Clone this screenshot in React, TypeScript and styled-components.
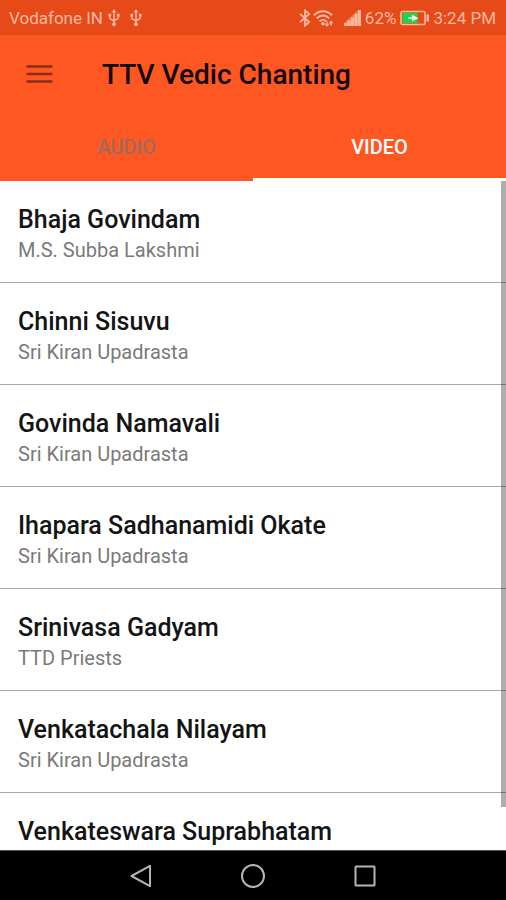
import React from 'react';
import styled, { createGlobalStyle } from 'styled-components';

const GlobalStyle = createGlobalStyle`
  * { box-sizing: border-box; }
  body { margin: 0; font-family: Roboto, sans-serif; background: #ffffff; }
  button { font-family: inherit; }
`;

const Screen = styled.div`
  display: flex;
  flex-direction: column;
  height: 100vh;
  overflow: hidden;
`;

const StatusBar = styled.div`
  display: flex;
  align-items: center;
  justify-content: space-between;
  flex: none;
  height: 35px;
  padding: 0 10px 0 9px;
  background: #e64a19;
  color: #ffb9a0;
  font-size: 17px;
  line-height: 24px;
`;

const StatusGroup = styled.div<{ $gap: number }>`
  display: flex;
  align-items: center;
  gap: ${({ $gap }) => $gap}px;
  white-space: nowrap;
`;

const Signals = styled.span`
  display: flex;
  align-items: center;
  gap: 2px;
  margin-right: 6px;
`;

const Header = styled.header`
  flex: none;
  background: #ff5722;
`;

const Toolbar = styled.div`
  display: flex;
  align-items: center;
  height: 80px;
  padding: 0 24px;
  gap: 48px;
`;

const MenuButton = styled.button`
  display: flex;
  padding: 0;
  border: 0;
  background: none;
  color: #8a2f14;
  cursor: pointer;
`;

const Title = styled.h1`
  margin: 0;
  color: #140603;
  font-size: 28px;
  font-weight: 500;
  line-height: 36px;
  white-space: nowrap;
`;

const Tabs = styled.div`
  display: flex;
  height: 66px;
`;

const Tab = styled.button<{ $active: boolean }>`
  flex: 1;
  padding: 0;
  border: 0;
  border-bottom: 3px solid ${({ $active }) => ($active ? '#ffffff' : '#ff5722')};
  background: none;
  color: ${({ $active }) => ($active ? '#ffffff' : '#9c6c5c')};
  font-size: 20px;
  font-weight: 500;
  line-height: 24px;
  cursor: pointer;
`;

const Content = styled.main`
  position: relative;
  flex: 1;
  min-height: 0;
  overflow: hidden;
  background: #ffffff;
`;

const List = styled.ul`
  margin: 0;
  padding: 0;
  list-style: none;
`;

const Row = styled.li`
  height: 102px;
  padding: 23px 18px 0;
  border-bottom: 1px solid #a8a8a8;
`;

const Name = styled.div`
  color: #141414;
  font-size: 25px;
  font-weight: 500;
  line-height: 32px;
`;

const Artist = styled.div`
  color: #7a7a7a;
  font-size: 20px;
  line-height: 28px;
`;

const ScrollThumb = styled.div`
  position: absolute;
  top: 0;
  right: 0;
  width: 5px;
  height: calc(100% - 43px);
  background: rgba(0, 0, 0, 0.32);
`;

const NavBar = styled.nav`
  display: flex;
  align-items: center;
  justify-content: center;
  gap: 88px;
  flex: none;
  height: 50px;
  border-top: 1px solid #555555;
  background: #000000;
`;

const NavButton = styled.button`
  display: flex;
  padding: 0;
  border: 0;
  background: none;
  color: #b4b4b4;
  cursor: pointer;
`;

const UsbIcon = () => (
  <svg width="12" height="18" viewBox="0 0 12 18" fill="none" stroke="currentColor" strokeWidth="1.4" aria-hidden="true">
    <path d="M6 2v13M1.8 6v3.2c0 1.6 4.2 1.4 4.2 3.4M10.2 6v3c0 1.6-4.2 1.4-4.2 3.4" />
    <path d="M6 0l2.2 3.4H3.8zM.4 4.8h2.8v2.6H.4zM8.8 4.8h2.8v2.6H8.8z" fill="currentColor" stroke="none" />
    <circle cx="6" cy="15.2" r="1.9" fill="currentColor" stroke="none" />
  </svg>
);

const BluetoothIcon = () => (
  <svg width="12" height="18" viewBox="0 0 12 18" fill="none" stroke="currentColor" strokeWidth="1.8" aria-hidden="true">
    <path d="M1.2 5l9 8L6 16.6V1.4L10.2 5l-9 8" />
  </svg>
);

const WifiIcon = () => (
  <svg width="21" height="18" viewBox="0 0 21 18" fill="none" stroke="currentColor" strokeWidth="2" aria-hidden="true">
    <path d="M1 6.2C6 .8 14 .8 19 6.2M3.8 9.4c3.6-3.8 8.8-3.8 12.4 0M6.6 12.4c2-2 4.8-2 6.8 0" />
    <circle cx="10" cy="14.8" r="1.8" fill="currentColor" stroke="none" />
    <path d="M14 12.5v4M12.5 15l1.5 1.7 1.5-1.7M18 16.7v-4M16.5 14.2l1.5-1.7 1.5 1.7" strokeWidth="1.3" />
  </svg>
);

const CellIcon = () => (
  <svg width="17" height="16" viewBox="0 0 17 16" fill="currentColor" aria-hidden="true">
    <path d="M0 13h3v3H0zM3.5 10.5h3V16h-3zM7 7.5h3V16H7zM10.5 4h3v12h-3zM14 0h3v16h-3z" />
    <path d="M0 13L14 0v16H0z" opacity=".45" />
  </svg>
);

const BatteryIcon = () => (
  <svg width="29" height="16" viewBox="0 0 29 16" aria-hidden="true">
    <rect x="1" y="1.5" width="24" height="13" rx="1.5" fill="none" stroke="currentColor" strokeWidth="1.6" />
    <path d="M26.5 4.5H29v7h-2.500z" fill="currentColor" />
    <path d="M2.500 3h15v10h-15z" fill="#12dc4e" />
    <path d="M8 7.200h4V4.800l6.500 3.400-6.500 3V9H8z" fill="#e9ffe9" />
  </svg>
);

const MenuIcon = () => (
  <svg width="30" height="22" viewBox="0 0 30 22" stroke="currentColor" strokeWidth="2.4" aria-hidden="true">
    <path d="M2.500 2.500h26M2.500 10h26M2.500 17.500h26" />
  </svg>
);

const navIcons = [
  { label: 'Back', shape: <path d="M2.500 12L21 1.800v20.400z" /> },
  { label: 'Home', shape: <circle cx="12" cy="12" r="11" /> },
  { label: 'Recent apps', shape: <rect x="2.500" y="2.500" width="19" height="19" rx="0.500" /> },
];

const tracks = [
  { name: 'Bhaja Govindam', artist: 'M.S. Subba Lakshmi' },
  { name: 'Chinni Sisuvu', artist: 'Sri Kiran Upadrasta' },
  { name: 'Govinda Namavali', artist: 'Sri Kiran Upadrasta' },
  { name: 'Ihapara Sadhanamidi Okate', artist: 'Sri Kiran Upadrasta' },
  { name: 'Srinivasa Gadyam', artist: 'TTD Priests' },
  { name: 'Venkatachala Nilayam', artist: 'Sri Kiran Upadrasta' },
  { name: 'Venkateswara Suprabhatam', artist: '' },
];

export default function App() {
  const [tab, setTab] = React.useState('VIDEO');
  return (
    <>
      <GlobalStyle />
      <Screen>
        <StatusBar>
          <StatusGroup $gap={10}>
            <StatusGroup $gap={5}>
              <span>Vodafone IN</span>
              <UsbIcon />
            </StatusGroup>
            <UsbIcon />
          </StatusGroup>
          <StatusGroup $gap={4}>
            <Signals>
              <BluetoothIcon />
              <WifiIcon />
            </Signals>
            <CellIcon />
            <span>62%</span>
            <BatteryIcon />
            <span>3:24 PM</span>
          </StatusGroup>
        </StatusBar>
        <Header>
          <Toolbar>
            <MenuButton aria-label="Open menu">
              <MenuIcon />
            </MenuButton>
            <Title>TTV Vedic Chanting</Title>
          </Toolbar>
          <Tabs role="tablist">
            {['AUDIO', 'VIDEO'].map((label) => (
              <Tab
                key={label}
                role="tab"
                aria-selected={tab === label}
                $active={tab === label}
                onClick={() => setTab(label)}
              >
                {label}
              </Tab>
            ))}
          </Tabs>
        </Header>
        <Content>
          <List>
            {tracks.map((track) => (
              <Row key={track.name}>
                <Name>{track.name}</Name>
                <Artist>{track.artist}</Artist>
              </Row>
            ))}
          </List>
          <ScrollThumb />
        </Content>
        <NavBar aria-label="System navigation">
          {navIcons.map(({ label, shape }) => (
            <NavButton key={label} aria-label={label}>
              <svg width="24" height="24" viewBox="0 0 24 24" fill="none" stroke="currentColor" strokeWidth="2" strokeLinejoin="round" aria-hidden="true">
                {shape}
              </svg>
            </NavButton>
          ))}
        </NavBar>
      </Screen>
    </>
  );
}
